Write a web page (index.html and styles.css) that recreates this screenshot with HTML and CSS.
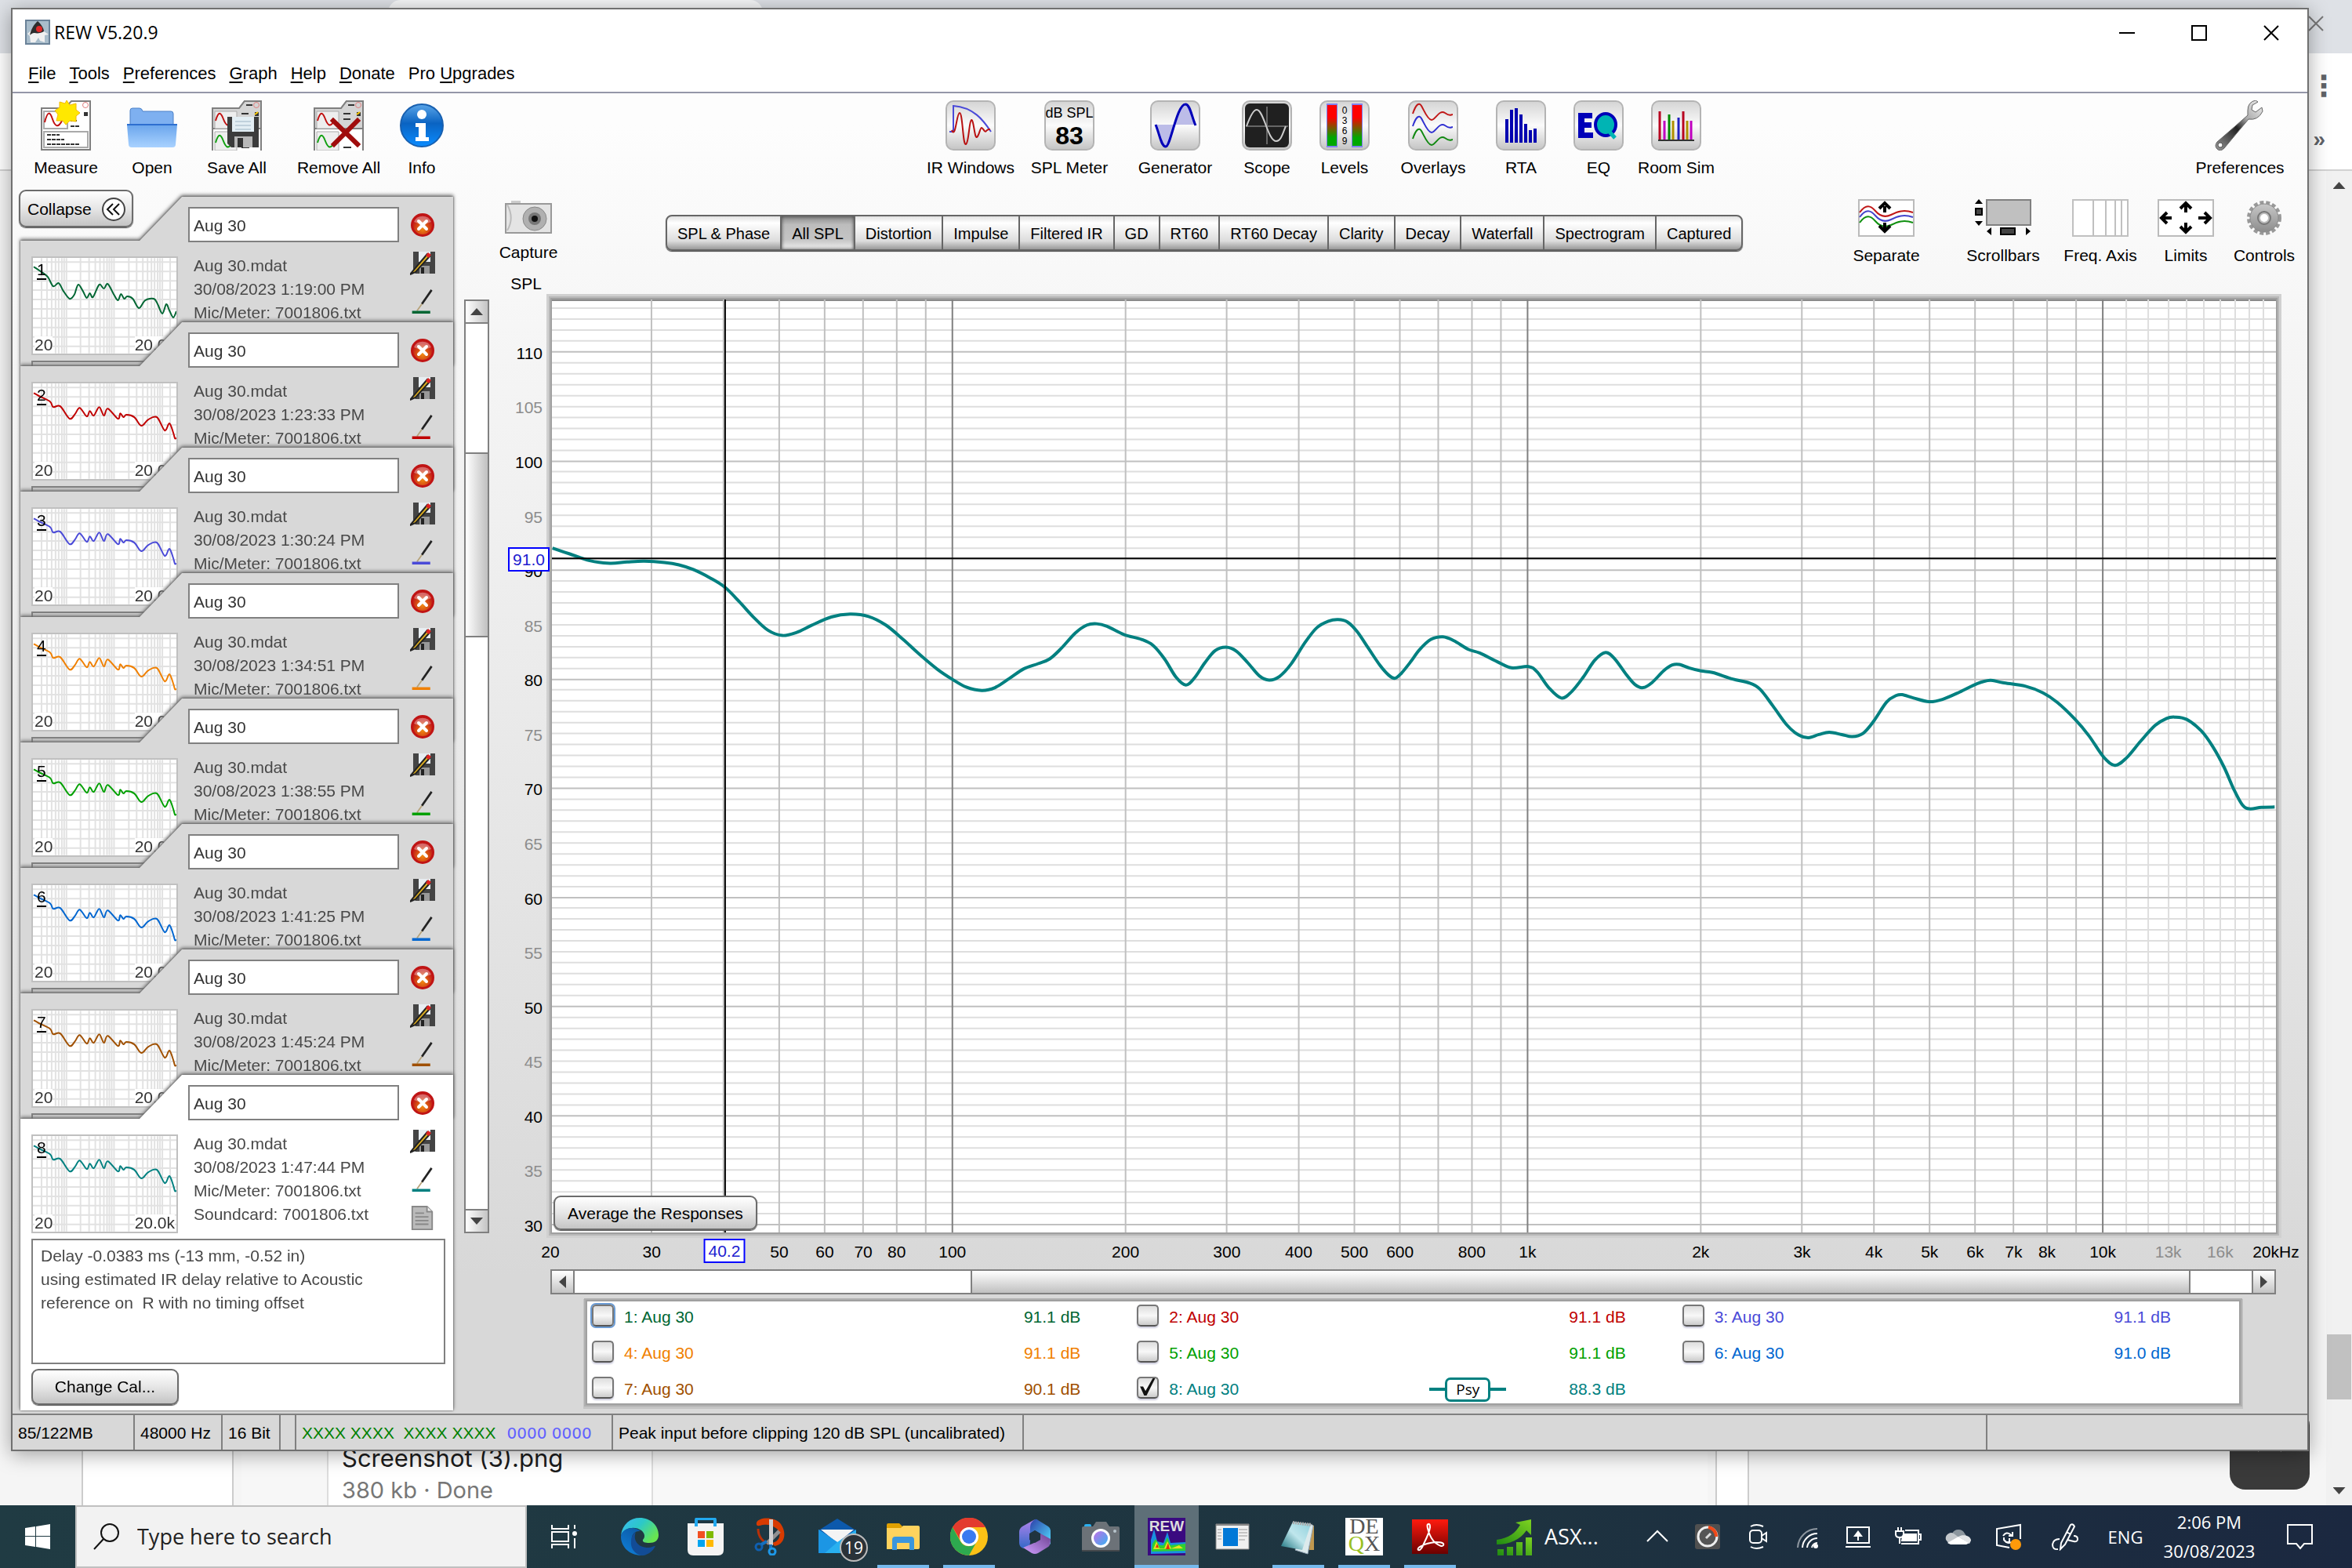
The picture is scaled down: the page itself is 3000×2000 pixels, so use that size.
FILE: index.html
```html
<!DOCTYPE html>
<html lang="en">
<head>
<meta charset="utf-8">
<title>REW V5.20.9</title>
<link rel="stylesheet" href="styles.css">
</head>
<body>
<svg class="defs" aria-hidden="true">
  <defs>
    <linearGradient id="gKey" x1="0" y1="0" x2="0" y2="1"><stop offset="0" stop-color="#d4d4d4"/><stop offset=".5" stop-color="#fbfbfb"/><stop offset="1" stop-color="#c4c4c4"/></linearGradient>
    <linearGradient id="gFolder" x1="0" y1="0" x2="0" y2="1"><stop offset="0" stop-color="#6aa5ec"/><stop offset="1" stop-color="#a9d2ff"/></linearGradient>
    <linearGradient id="gInfo" x1="0" y1="0" x2="0" y2="1"><stop offset="0" stop-color="#5aa5e8"/><stop offset=".45" stop-color="#0a63c2"/><stop offset="1" stop-color="#0a8cff"/></linearGradient>
    <linearGradient id="gLevel" x1="0" y1="0" x2="0" y2="1"><stop offset=".3" stop-color="#f00"/><stop offset=".8" stop-color="#00a800"/></linearGradient>
    <radialGradient id="gClose" cx=".5" cy=".7" r=".6"><stop offset="0" stop-color="#f08a10"/><stop offset="1" stop-color="#c01818"/></radialGradient>
    <linearGradient id="gWrench" x1="1" y1="0" x2="0" y2="1"><stop offset="0" stop-color="#f4f4f4"/><stop offset=".35" stop-color="#aaa"/><stop offset=".55" stop-color="#222"/><stop offset="1" stop-color="#999"/></linearGradient>
    <linearGradient id="gGear" x1="0" y1="0" x2="0" y2="1"><stop offset="0" stop-color="#c8c8c8"/><stop offset="1" stop-color="#8c8c8c"/></linearGradient>
    <linearGradient id="gEdge" x1="0" y1="0" x2="1" y2=".6"><stop offset="0" stop-color="#3ab8f4"/><stop offset=".5" stop-color="#2cc8c8"/><stop offset="1" stop-color="#68e650"/></linearGradient>
    <linearGradient id="gEdgeBlue" x1="0" y1="1" x2=".6" y2="0"><stop offset="0" stop-color="#0f82dc"/><stop offset="1" stop-color="#0c5aa6"/></linearGradient>
    <linearGradient id="gRed" x1="0" y1="0" x2="0" y2="1"><stop offset="0" stop-color="#ff1a0e"/><stop offset="1" stop-color="#6a0000"/></linearGradient>
    <linearGradient id="gAsx" x1="0" y1="1" x2="1" y2="0"><stop offset="0" stop-color="#1f8a12"/><stop offset="1" stop-color="#7ed321"/></linearGradient>
    <linearGradient id="gNote" x1="1" y1="0" x2="0" y2="1"><stop offset="0" stop-color="#8ed0dc"/><stop offset=".5" stop-color="#bfe6ec"/><stop offset="1" stop-color="#17707c"/></linearGradient>
    <linearGradient id="gLens" x1="0" y1="0" x2="1" y2="1"><stop offset="0" stop-color="#c070e8"/><stop offset="1" stop-color="#38b0f0"/></linearGradient>
    <linearGradient id="gM1" x1="0" y1="0" x2="0" y2="1"><stop offset="0" stop-color="#b284ec"/><stop offset="1" stop-color="#3468c8"/></linearGradient>
    <linearGradient id="gM2" x1="0" y1="0" x2="1" y2="1"><stop offset="0" stop-color="#2c3fa8"/><stop offset="1" stop-color="#52dcff"/></linearGradient>
    <linearGradient id="gM3" x1="1" y1="0" x2="0" y2="1"><stop offset="0" stop-color="#6c4090"/><stop offset="1" stop-color="#cfa0ff"/></linearGradient>
    <symbol id="key" viewBox="0 0 64 64"><rect x="1" y="1" width="62" height="62" rx="9" fill="url(#gKey)" stroke="#b4b4b4" stroke-width="2"/></symbol>
    <symbol id="sheet" viewBox="0 0 64 64">
      <path d="M1 64V10h34l7-9h21v63" fill="#fff" stroke="#7f7f7f" stroke-width="2"/>
      <path d="M1 36V10h34l7-9h21v35z" fill="#d4d4d4" stroke="#7f7f7f" stroke-width="2"/>
      <path d="M4 14h28v22H4zM4 40h28v24H4z" fill="#eee" stroke="#aaa"/>
      <path d="M5 26c4-14 7-10 10-2s6 10 10 4" fill="none" stroke="#c01010" stroke-width="2"/>
      <path d="M5 54c4-14 7-10 10-2s6 10 10 4" fill="none" stroke="#10a010" stroke-width="2"/>
      <path d="M44 6h8M38 17h9M38 24h9M38 44h9M38 60h10" stroke="#333" stroke-width="2"/>
      <circle cx="57" cy="6" r="3.5" fill="none" stroke="#e08080"/><path d="M55 15h5v5h-5z" fill="#333"/><path d="M55 18l4-3" stroke="#fc0" stroke-width="2"/>
    </symbol>
    <symbol id="close" viewBox="0 0 32 32"><circle cx="16" cy="16" r="15" fill="#c01414"/><circle cx="16" cy="16" r="12" fill="url(#gClose)"/><path d="M5 12a12 12 0 0 1 22 0q-11 5-22 0" fill="#fff" opacity=".35"/><path d="M11 11l10 10M21 11L11 21" stroke="#fff" stroke-width="4" stroke-linecap="round"/></symbol>
    <symbol id="disk" viewBox="0 0 32 30"><path d="M4 0h28v28H7l-3-3z" fill="#444"/><path d="M11 0h15v13H11z" fill="#e8eef2"/><path d="M12 18h13v10H12z" fill="#999"/><path d="M14 20h4v8h-4z" fill="#222"/><path d="M22 3L5 23l-5 6 7-3L25 6z" fill="#e0b020" stroke="#222" stroke-width="2"/><path d="M20 5l3-4 4 3-3 4z" fill="#d22"/></symbol>
    <symbol id="pen" viewBox="0 0 32 36"><path d="M29 1L15 21" stroke="#222" stroke-width="3"/><path d="M15 21l-7 10" stroke="#b5a27a" stroke-width="2"/><path d="M1 31h26v4H1z" fill="currentColor"/></symbol>
    <symbol id="doc" viewBox="0 0 32 34"><path d="M2 1h20l7 7v24H2z" fill="#bbb" stroke="#888" stroke-width="2"/><path d="M22 1v7h7" fill="#eee" stroke="#888" stroke-width="2"/><path d="M6 10h12M6 15h18M6 20h18M6 25h18" stroke="#888" stroke-width="2"/></symbol>
  </defs>
</svg>

<div class="desktop">
  <div class="browser" aria-hidden="true">
    <div class="tabstrip"><span class="browser-tab"></span><svg class="x-icon" viewBox="0 0 20 20"><path d="M1 1l18 18M19 1L1 19" stroke="#777" stroke-width="2"/></svg></div>
    <div class="browser-bar"><span class="dots">⋮</span><span class="more">»</span></div>
    <div class="browser-body">
      <div class="page">
        <div class="col-a"></div><div class="col-b"></div><div class="col-c"></div>
        <div class="file-card"><p class="file-name">Screenshot (3).png</p><p class="file-state">380 kb · Done</p></div>
        <div class="col-d"></div><div class="col-e"></div>
        <div class="col-f"><div class="to-top"><svg viewBox="0 0 30 24"><path d="M15 0L30 24 15 13 0 24z" fill="#ccc"/></svg></div></div>
      </div>
      <div class="page-scroll"><span class="tri up"></span><span class="page-thumb"></span><span class="tri down"></span></div>
    </div>
  </div>

  <main class="rew">
    <header class="titlebar">
      <svg class="app-icon" viewBox="0 0 32 32"><rect x="1" y="1" width="30" height="30" fill="#a9bdcb" stroke="#6a8298" stroke-width="2"/><path d="M16 3c5 5 6 9 8 12l6 4-5 1 0 9-6-2-2-4-4 6H7l-1-8-3-3 6-5c2-4 3-7 7-10z" fill="#f0f0f0"/><path d="M16 2c4 3 8 9 8 13-3 2-8 3-12 2-3 0-5 2-6 3 1-6 5-14 10-18z" fill="#2c2c2c"/><circle cx="18" cy="12" r="4" fill="#e02828"/></svg>
      <h1>REW V5.20.9</h1>
      <div class="win-buttons">
        <button aria-label="Minimize"><svg viewBox="0 0 20 20"><path d="M0 10h20" stroke="#000" stroke-width="2"/></svg></button>
        <button aria-label="Maximize"><svg viewBox="0 0 20 20"><path d="M1 1h18v18H1z" fill="none" stroke="#000" stroke-width="2"/></svg></button>
        <button aria-label="Close"><svg viewBox="0 0 20 20"><path d="M1 1l18 18M19 1L1 19" stroke="#000" stroke-width="2"/></svg></button>
      </div>
    </header>
    <nav class="menu">
      <a href="#"><u>F</u>ile</a><a href="#"><u>T</u>ools</a><a href="#"><u>P</u>references</a><a href="#"><u>G</u>raph</a><a href="#"><u>H</u>elp</a><a href="#"><u>D</u>onate</a><a href="#">Pro <u>U</u>pgrades</a>
    </nav>

    <div class="toolbar">
      <div class="tools-left">
        <button class="tool"><svg viewBox="0 0 64 64"><path d="M1 63V10h30l8-9h24v62z" fill="#fff" stroke="#7f7f7f" stroke-width="2"/><path d="M4 14h30v22H4zM4 40h56v20H4z" fill="#fff" stroke="#aaa" stroke-width="2"/><path d="M5 28c4-16 7-13 10-4s7 12 12 2" fill="none" stroke="#c01010" stroke-width="2"/><path d="M8 44h16M8 50h22M8 56h42M38 33h12M38 26h8" stroke="#333" stroke-width="2" stroke-dasharray="5 1"/><path d="M55 15h5v5h-5z" fill="#333"/><circle cx="57" cy="6" r="3.5" fill="none" stroke="#e08080"/><path d="M33 0l4 6 8-2 0 8 5 4-5 4 0 7-8-1-5 5-4-5-8 0 2-8-4-5 6-4 0-7 7 2z" fill="#ffe800" stroke="#f4b800"/></svg>Measure</button>
        <button class="tool"><svg viewBox="0 0 64 64"><path d="M4 32V13q0-3 3-3h9q3 0 4 4h36q3 0 3 3v15z" fill="#7eb0f0" stroke="#4a80c8" stroke-width="1"/><path d="M0 31h64l-2 25q0 4-4 4H6q-4 0-4-4z" fill="url(#gFolder)"/><path d="M0 31h64" stroke="#2d6fd0" stroke-width="2"/></svg>Open</button>
        <button class="tool"><svg viewBox="0 0 64 64"><use href="#sheet"/><path d="M20 21h40v39H25l-5-5z" fill="#3c3c3c"/><path d="M26 21h28v19H26z" fill="#e3eef4"/><path d="M30 27h20M30 32h20M30 37h20" stroke="#9db4c4"/><path d="M29 46h23v14H29z" fill="#b8b8b8"/><path d="M33 48h7v12h-7z" fill="#333"/></svg>Save All</button>
        <button class="tool"><svg viewBox="0 0 64 64"><use href="#sheet"/><path d="M25 26l31 30M56 26L26 56" stroke="#a00c0c" stroke-width="6" stroke-linecap="square"/></svg>Remove All</button>
        <button class="tool"><svg viewBox="0 0 64 64"><circle cx="32" cy="32" r="27" fill="url(#gInfo)" stroke="#1860b0" stroke-width="2"/><circle cx="32" cy="18" r="6" fill="#fff"/><path d="M24 29h13v18h4v5H24v-5h4V34h-4z" fill="#fff"/></svg>Info</button>
      </div>
      <div class="tools-mid">
        <button class="tool"><svg viewBox="0 0 64 64"><use href="#key"/><path d="M5 40h5V7c26 2 38 18 48 33" fill="none" stroke="#4a4ad8" stroke-width="2"/><path d="M8 38c5 12 6-22 10-22s4 42 8 40 4-30 7-31 4 24 7 22 4-12 6-12 4 7 6 4 3-2 5-2" fill="none" stroke="#b81010" stroke-width="2"/></svg>IR Windows</button>
        <button class="tool"><svg viewBox="0 0 64 64"><use href="#key"/><text x="32" y="22" class="key-small">dB SPL</text><text x="32" y="56" class="key-big">83</text></svg>SPL Meter</button>
        <button class="tool"><svg viewBox="0 0 64 64"><use href="#key"/><path d="M7 31h25c-5 12-6 28-12 28S12 40 7 31M32 31h26C52 20 50 5 45 5s-8 14-13 26" fill="#bcbce8"/><path d="M7 31c5 12 7 28 13 28S34 5 45 5c6 0 8 16 13 27" fill="none" stroke="#0000b8" stroke-width="3"/></svg>Generator</button>
        <button class="tool"><svg viewBox="0 0 64 64"><use href="#key"/><rect x="4" y="4" width="56" height="56" rx="6" fill="#202020"/><path d="M5 33h54M32 8v48" stroke="#666" stroke-width="2"/><path d="M6 33c5-14 9-21 13-21 9 0 14 40 25 40 6 0 8-10 12-19" fill="none" stroke="#ccc" stroke-width="2"/></svg>Scope</button>
        <button class="tool"><svg viewBox="0 0 64 64"><use href="#key"/><path d="M9 4h14v56H9zM41 4h14v56H41z" fill="#8080f0"/><path d="M10 6h12v52H10zM42 6h12v52H42z" fill="url(#gLevel)"/><text x="32" y="17" class="key-tiny">0</text><text x="32" y="30" class="key-tiny">3</text><text x="32" y="43" class="key-tiny">6</text><text x="32" y="56" class="key-tiny">9</text></svg>Levels</button>
        <button class="tool"><svg viewBox="0 0 64 64"><use href="#key"/><g fill="none" stroke-width="2"><path d="M6 17c4-12 8-15 11-10s8 18 13 18 10-14 17-9 7 2 10 2" stroke="#c01818"/><path d="M6 33c4-12 8-15 11-10s8 18 13 18 10-14 17-9 7 2 10 2" stroke="#3030d0"/><path d="M6 49c4-12 8-15 11-10s8 18 13 18 10-14 17-9 7 2 10 2" stroke="#108810"/></g></svg>Overlays</button>
        <button class="tool"><svg viewBox="0 0 64 64"><use href="#key"/><path d="M14 54V24M20 54V12M26 54V10M32 54V18M38 54V30M44 54V38M50 54V36" stroke="#0000b0" stroke-width="4"/></svg>RTA</button>
        <button class="tool"><svg viewBox="0 0 64 64"><use href="#key"/><path d="M6 16h18v7H14v5h9v7h-9v6h11v7H6z" fill="#0000b8"/><ellipse cx="41" cy="31" rx="13" ry="14" fill="#00b4b4" stroke="#0000b8" stroke-width="4"/><path d="M44 38l9 10" stroke="#00b4b4" stroke-width="5"/></svg>EQ</button>
        <button class="tool"><svg viewBox="0 0 64 64"><use href="#key"/><g stroke-width="3"><path d="M11 14v36M41 14v36" stroke="#b80020"/><path d="M17 26v24M51 26v24" stroke="#c000c0"/><path d="M23 18v32" stroke="#008800"/><path d="M28 26v24M46 26v24" stroke="#b09000"/><path d="M35 22v28" stroke="#2020c0"/></g><path d="M9 51h46" stroke="#333" stroke-width="2"/></svg>Room Sim</button>
      </div>
      <div class="tools-right">
        <button class="tool"><svg viewBox="0 0 64 64"><path d="M52 0q-10 2-10 13v6L3 53q-4 5 0 9 4 4 9-1l31-37q12 2 18-10l-1-5-8 6-5-3 1-6 7-4z" fill="url(#gWrench)" stroke="#666"/><circle cx="7" cy="57" r="3" fill="#fff" stroke="#555"/></svg>Preferences</button>
      </div>
    </div>

    <div class="workspace">
      <aside class="sidebar">
        <button class="btn collapse">Collapse <svg viewBox="0 0 30 30"><circle cx="15" cy="15" r="14" fill="#fff" stroke="#444" stroke-width="2"/><path d="M14 8l-7 7 7 7M22 8l-7 7 7 7" fill="none" stroke="#111" stroke-width="2"/></svg></button>
        <div class="cards" id="cards"></div>
      </aside>

      <div class="vscroll"><button aria-label="Scroll up"><i class="tri up"></i></button><span class="vtrack"><span class="vthumb"></span></span><button aria-label="Scroll down"><i class="tri down"></i></button></div>

      <section class="graph">
        <div class="graph-head">
          <div class="capture-col">
            <button class="tool small"><svg class="camera" viewBox="0 0 60 42"><path d="M8 0h12v5H8z" fill="#ccc"/><rect x="1" y="4" width="58" height="37" fill="#e4e4e4" stroke="#999" stroke-width="2"/><path d="M3 38c6-10 6-22 0-33" fill="none" stroke="#bbb" stroke-width="2"/><circle cx="38" cy="23" r="15" fill="#b0b0b0" stroke="#888"/><circle cx="38" cy="23" r="8" fill="#777"/><circle cx="38" cy="23" r="4" fill="#111"/></svg>Capture</button>
            <span class="axis-title">SPL</span>
          </div>
          <div class="tabs" role="tablist">
            <button role="tab">SPL &amp; Phase</button><button role="tab" class="on">All SPL</button><button role="tab">Distortion</button><button role="tab">Impulse</button><button role="tab">Filtered IR</button><button role="tab">GD</button><button role="tab">RT60</button><button role="tab">RT60 Decay</button><button role="tab">Clarity</button><button role="tab">Decay</button><button role="tab">Waterfall</button><button role="tab">Spectrogram</button><button role="tab">Captured</button>
          </div>
          <div class="graph-tools">
            <button class="tool small separate"><svg viewBox="0 0 72 48"><rect x="1" y="1" width="70" height="46" fill="#fff" stroke="#bbb" stroke-width="2"/><g fill="none" stroke-width="2"><path d="M2 17C10 6 16 8 22 15s12 9 20 5 16-7 28-3" stroke="#c01818"/><path d="M2 23c8-11 14-9 20-2s12 9 20 5 16-7 28-3" stroke="#4444cc"/><path d="M2 30c8-11 14-9 20-2s12 9 20 5 16-7 28-3" stroke="#109010"/></g><path d="M34 17V9M34 30v8M27 12l7-7 7 7M27 34l7 7 7-7" fill="none" stroke="#000" stroke-width="4"/></svg>Separate</button>
            <button class="tool small wide"><svg viewBox="0 0 72 48"><rect x="15" y="1" width="56" height="32" fill="#c0c0c0" stroke="#808080" stroke-width="2"/><path d="M1 12h8v8H1zM33 37h18v8H33z" fill="#444" stroke="#000" stroke-width="2"/><path d="M5 0l5 6H0zM5 34l5-6H0zM15 41l6-5v10zM71 41l-6-5v10z" fill="#000"/></svg>Scrollbars</button>
            <button class="tool small wide"><svg viewBox="0 0 72 48"><rect x="1" y="1" width="70" height="46" fill="#fff" stroke="#c0c0c0" stroke-width="2"/><path d="M27 1v46M43 1v46M55 1v46M63 1v46" stroke="#c0c0c0" stroke-width="2"/></svg>Freq. Axis</button>
            <button class="tool small limits"><svg viewBox="0 0 72 48"><rect x="1" y="1" width="70" height="46" fill="#fff" stroke="#bbb" stroke-width="2"/><path d="M36 17V8M36 30v9M18 24H8M52 24h12M29 12l7-7 7 7M29 35l7 7 7-7M12 17l-7 7 7 7M60 17l7 7-7 7" fill="none" stroke="#000" stroke-width="4"/></svg>Limits</button>
            <button class="tool small controls"><svg viewBox="0 0 72 48"><circle cx="36" cy="24" r="20" fill="none" stroke="#999" stroke-width="4" stroke-dasharray="5 3"/><circle cx="36" cy="24" r="18" fill="url(#gGear)" stroke="#888"/><circle cx="36" cy="24" r="8" fill="#bbb" stroke="#777" stroke-width="2"/><circle cx="36" cy="24" r="5" fill="#fff"/></svg>Controls</button>
          </div>
        </div>
        <div class="plot-row">
          <div class="y-axis" id="yAxis"><span class="cursor-y">91.0</span></div>
          <div class="plot">
            <svg id="plot" viewBox="0 0 2200 1193" preserveAspectRatio="none" role="img" aria-label="SPL against frequency"></svg>
            <button class="btn average">Average the Responses</button>
          </div>
        </div>
        <div class="x-axis" id="xAxis"><span class="cursor-x">40.2</span></div>
        <div class="hscroll"><button aria-label="Scroll left"><i class="tri left"></i></button><span class="htrack"><span class="hthumb"></span></span><button aria-label="Scroll right"><i class="tri right"></i></button></div>
        <div class="legend" id="legend"></div>
      </section>
    </div>

    <footer class="status">
      <span>85/122MB</span><span>48000 Hz</span><span>16 Bit</span><span></span>
      <span class="bits"><b class="green">XXXX XXXX&nbsp; XXXX XXXX</b><b class="blue">0000 0000</b></span>
      <span>Peak input before clipping 120 dB SPL (uncalibrated)</span><span></span><span></span>
    </footer>
  </main>
</div>

<footer class="taskbar">
  <button class="start" aria-label="Start"><svg viewBox="0 0 32 32"><path d="M0 5l13-2v12H0zM14 3l18-3v15H14zM0 16h13v13L0 27zM14 16h18v16l-18-3z" fill="#fff"/></svg></button>
  <label class="search"><svg viewBox="0 0 34 34"><circle cx="21" cy="12" r="11" fill="none" stroke="#111" stroke-width="2"/><path d="M13 20L1 33" stroke="#111" stroke-width="2"/></svg><input type="text" aria-label="Search" placeholder="Type here to search"></label>
  <div class="apps">
    <button class="app" aria-label="Task View"><svg viewBox="0 0 48 48"><path d="M8 9v5h21V9M8 39v-5h21v5M8 18h21v12H8zM37 9v5M37 26v13" fill="none" stroke="#fff" stroke-width="2"/><circle cx="37" cy="20" r="3" fill="#fff"/></svg></button>
    <button class="app" aria-label="Edge"><svg viewBox="0 0 48 48"><path d="M0 22C2 8 12 0 24 0c14 0 24 10 24 22 0 7-5 10-12 10-5 0-9-1-8-4 3-3 3-8-2-12C18 10 5 12 0 22z" fill="url(#gEdge)"/><path d="M0 24C0 14 16 9 25 17c-8-1-12 5-11 12 1 10 9 18 18 18C16 51 0 40 0 24z" fill="url(#gEdgeBlue)"/><path d="M19 18c-4 10 2 20 16 20 4 0 6-2 9-2-4 8-11 12-18 12-9-2-14-10-13-18 0-6 3-10 6-12z" fill="#124c96"/></svg></button>
    <button class="app" aria-label="Microsoft Store"><svg viewBox="0 0 48 48"><path d="M1 7h46v34q0 7-7 7H8q-7 0-7-7z" fill="#f4f4f4"/><path d="M12 11V3q0-2 2-2h20q2 0 2 2v8" fill="none" stroke="#22a9f0" stroke-width="4"/><path d="M14 17h9v9h-9z" fill="#f25022"/><path d="M25 17h9v9h-9z" fill="#7fba00"/><path d="M14 28h9v9h-9z" fill="#00a4ef"/><path d="M25 28h9v9h-9z" fill="#ffb900"/></svg></button>
    <button class="app" aria-label="Snip"><svg viewBox="0 0 48 48"><path d="M7 14c0 10 6 18 15 19" fill="none" stroke="#b83008" stroke-width="3"/><path d="M5 6C8-1 28-2 36 8c8 11 5 26-8 28l-3-4c10-2 12-12 6-18-6-5-12-6-18-5-4 1-9 3-8-3z" fill="#d83b01"/><path d="M34 17L18 33" stroke="#909090" stroke-width="5"/><path d="M21 2h5v33h-5z" fill="#d0d0d0"/><circle cx="8" cy="37" r="4" fill="none" stroke="#0f5fb0" stroke-width="3"/><path d="M11 34l7-4M23 34v5" stroke="#1570c0" stroke-width="4"/><circle cx="25" cy="43" r="4" fill="none" stroke="#1d98e8" stroke-width="3"/></svg></button>
    <button class="app" aria-label="Mail, 19 unread"><svg viewBox="0 0 48 48"><path d="M0 16L24 1l24 15v29H0z" fill="#0c59ac"/><path d="M3 15h42L24 32z" fill="#f4f4f4"/><path d="M0 15l24 16 24-16v30H0z" fill="#28b0f0"/><path d="M0 45V15l24 16L8 45z" fill="#1c96e4"/></svg><span class="badge">19</span></button>
    <button class="app open" aria-label="File Explorer"><svg viewBox="0 0 48 48"><path d="M3 9q0-2 2-2h14l4 4v6H3z" fill="#e0a000"/><path d="M3 13h18l3-3h19q2 0 2 2v26q0 2-2 2H3z" fill="#ffd35e"/><path d="M10 41V28q0-4 4-4h20q4 0 4 4v13h-6v-9H16v9z" fill="#3a96dd"/></svg></button>
    <button class="app open" aria-label="Chrome"><svg viewBox="0 0 48 48"><circle cx="24" cy="24" r="24" fill="#fbc116"/><path d="M3 12a24 24 0 0 1 42 0H24a12 12 0 0 0-10 18z" fill="#e33b2e"/><path d="M3 12a24 24 0 0 0 21 36l10-18a12 12 0 0 1-21 0z" fill="#2da94f"/><circle cx="24" cy="24" r="12" fill="#fff"/><circle cx="24" cy="24" r="9" fill="#3a7af0"/></svg></button>
    <button class="app" aria-label="Microsoft 365"><svg viewBox="0 0 48 48"><path d="M24 2L8 11q-4 3-4 7v14q0 5 5 7l7-2q2-2 2-7V16z" fill="url(#gM1)"/><path d="M24 2q-6 4-6 10v8l6-4 8 5 12 13V16q0-3-3-5L28 3q-2-2-4-1z" fill="url(#gM2)"/><path d="M44 27q0 8-3 10L28 45q-4 2-8 0L9 38l14-6q6-3 8-12z" fill="url(#gM3)"/><path d="M24 16l7 4v8l-7 4-7-4v-8z" fill="#20343f"/></svg></button>
    <button class="app" aria-label="Camera"><svg viewBox="0 0 48 48"><path d="M3 10q0-2 2-2h5q2 0 2 2v4H3z" fill="#2ab0f0"/><path d="M2 11h12l4-6h13l4 6h11q2 0 2 2v28q0 2-2 2H2q-2 0-2-2V13q0-2 2-2z" fill="#6c7278"/><path d="M0 41h48v2H0z" fill="#44484c"/><circle cx="24" cy="26" r="12" fill="#fff"/><circle cx="24" cy="26" r="9" fill="url(#gLens)"/><circle cx="42" cy="17" r="2" fill="#b8c4cc"/></svg></button>
    <button class="app open current" aria-label="REW"><svg viewBox="0 0 48 48"><path d="M0 0h48v48H0z" fill="#3a0a80"/><path d="M4 46V28l4-14 4 16 8 2 5-14 4 14 19-1v14z" fill="#1a90e0"/><path d="M5 43l1-10 4-6 5 8 5 0 5-10 4 10 19-2v9z" fill="#30d030"/><path d="M7 40l4-10 4 9 6 0 4-9 5 9 10-4 5 4z" fill="#e8e020"/><path d="M10 38l2-5 2 5zM23 40l3-8 2 8z" fill="#e03010"/><text x="24" y="17" class="rew-label">REW</text></svg></button>
    <button class="app" aria-label="Window"><svg viewBox="0 0 48 48"><path d="M3 8h42v32H3z" fill="#f0f0f0" stroke="#888"/><path d="M3 8h42v2H3z" fill="#888"/><path d="M12 13h19v23H12z" fill="#0078d7"/><path d="M32 15h11M32 19h11M32 23h11M32 28h8M5 15h5M5 19h5M5 23h5M5 27h5" stroke="#999"/></svg></button>
    <button class="app open" aria-label="Notepad"><svg viewBox="0 0 48 48"><path d="M40 8l4 2v31h-6z" fill="#c09850"/><path d="M38 7l5 3-7 36-16-5z" fill="#dceaec" stroke="#9ab" stroke-width="1"/><path d="M17 5l23 3-11 33-27-5z" fill="url(#gNote)"/><path d="M17 6l24 3" stroke="#aaa" stroke-width="4" stroke-dasharray="2 1"/></svg></button>
    <button class="app open" aria-label="DEQX"><svg viewBox="0 0 48 48"><path d="M0 0h48v48H0z" fill="#fff"/><text x="24" y="20" class="deqx">DE</text><text x="24" y="42" class="deqx"><tspan fill="#9ac020">Q</tspan>X</text></svg></button>
    <button class="app open" aria-label="Acrobat"><svg viewBox="0 0 48 48"><path d="M1 2h46v44H1z" fill="url(#gRed)"/><path d="M22 8q-3 0 0 9 3 10 9 15 8 6 10 3 2-4-10-4-11 1-18 5-6 3-4 5 3 2 8-10 6-12 7-19 0-5-2-4z" fill="none" stroke="#fff" stroke-width="2"/></svg></button>
  </div>
  <a class="news" href="#"><svg viewBox="0 0 48 48"><path d="M2 28c16-2 24-9 30-19l-6-3L46 2v20l-6-6C32 28 18 34 2 34z" fill="url(#gAsx)"/><path d="M3 40h8v8H3zM15 37h8v11h-8zM27 31h8v17h-8zM39 25h8v23h-8z" fill="url(#gAsx)"/></svg>ASX...</a>
  <div class="tray">
    <svg viewBox="0 0 36 36"><path d="M5 24l13-13 13 13" fill="none" stroke="#fff" stroke-width="2"/></svg>
    <svg viewBox="0 0 36 36"><rect x="2" y="2" width="32" height="32" rx="3" fill="#505050" stroke="none"/><circle cx="18" cy="18" r="12" fill="#555" stroke="#eee" stroke-width="3"/><path d="M16 20l6-6" stroke="#ddd" stroke-width="3"/><path d="M19 6a12 12 0 0 1 10 12" fill="none" stroke="#f04818" stroke-width="4"/></svg>
    <svg viewBox="0 0 36 36"><rect x="8" y="10" width="15" height="16" rx="4"/><path d="M23 17l6-4v11l-6-4M9 5q7-4 16 0M9 31q7 4 16 0"/></svg>
    <svg viewBox="0 0 36 36"><path d="M5 32A25 25 0 0 1 30 8" opacity=".5"/><path d="M11 32a19 19 0 0 1 19-18M17 32a13 13 0 0 1 13-12M23 32a7 7 0 0 1 7-6"/><circle cx="28" cy="30" r="2" fill="#fff"/></svg>
    <svg viewBox="0 0 36 36"><path d="M4 6h28v20H4zM2 31h32M18 23v-9"/><path d="M18 10l6 8H12z" fill="#fff" stroke="none"/></svg>
    <svg viewBox="0 0 36 36"><path d="M14 10h17v17H9M31 15h3v7h-3M5 6v5M9 6v5M2 11h10v4q0 4-5 4t-5-4zM7 19v8"/><path d="M12 15h16v8H10z" fill="#fff"/></svg>
    <svg viewBox="0 0 36 36"><path d="M10 14a9 9 0 0 1 16 0l4 6H8z" fill="#8c969e" stroke="none"/><path d="M2 22a7 7 0 0 1 10-8l8 6-14 7z" fill="#c4c8cc" stroke="none"/><path d="M4 26l14-8 14 8-4 2H8z" fill="#fff" stroke="none"/><path d="M18 18c6-4 16-1 16 5l-2 4z" fill="#e4e6e8" stroke="none"/></svg>
    <svg viewBox="0 0 36 36"><path d="M19 32L3 29V8l30-5v18M11 17q4-6 9-2l3 2M23 12v5h-5M19 20v5h-5M21 25q-4 3-9-3v-3"/><circle cx="27" cy="28" r="7" fill="#ff9a0a" stroke="none"/></svg>
    <svg class="pen-tray" viewBox="0 0 36 36"><path d="M12 34l1-8L25 3q3-2 5 2L18 28zM20 12l5 3M9 34q-7 1-7-6 1-7 9-7M29 17q5 0 5 4t-5 3-8-2"/></svg>
  </div>
  <span class="lang">ENG</span>
  <div class="clock"><span>2:06 PM</span><span>30/08/2023</span></div>
  <button class="notify" aria-label="Notifications"><svg viewBox="0 0 36 36"><path d="M2 3h31v24H23l-5 6-5-6H2z" fill="none" stroke="#fff" stroke-width="2"/></svg></button>
</footer>
<script src="app.js"></script>
</body>
</html>
```
FILE: styles.css
```css
* { box-sizing: border-box; }
body { margin: 0; height: 100vh; display: flex; flex-direction: column; overflow: hidden; font: 21px/26px "Liberation Sans", Arial, sans-serif; color: #000; }
button { font: inherit; color: inherit; border: 0; padding: 0; background: none; }
a { color: inherit; text-decoration: none; }
p, h1 { margin: 0; font-weight: 400; }
.defs { position: absolute; width: 0; height: 0; }
.desktop { position: relative; flex: 1; min-height: 0; }

/* browser behind the window */
.browser { height: 100%; display: flex; flex-direction: column; background: #f5f5f5; isolation: isolate; }
.tabstrip { height: 68px; background: #dee1e6; display: flex; justify-content: space-between; }
.browser-tab { margin-left: 495px; width: 478px; height: 40px; background: #f6f7f8; border-radius: 16px 16px 0 0; }
.x-icon { width: 20px; height: 20px; margin: 20px 36px 0 0; }
.browser-bar { height: 150px; background: #fff; border-bottom: 2px solid #d2d2d2; display: flex; flex-direction: column; align-items: flex-end; padding: 24px 34px 0 0; color: #5f6368; }
.dots { font: 700 36px/36px "DejaVu Sans", sans-serif; width: 20px; text-align: center; }
.more { font: 700 28px/36px "Liberation Sans", sans-serif; margin-top: 32px; }
.browser-body { flex: 1; min-height: 0; display: flex; }
.page { flex: 1; display: flex; }
.col-a { width: 106px; border-right: 2px solid #ccc; }
.col-b { width: 192px; background: #fff; border-right: 2px solid #ccc; }
.col-c { width: 119px; margin-left: 10px; margin-right: -10px; background: #f7f7f7; }
.file-card { width: 416px; background: #fff; border: 2px solid #ddd; border-width: 0 2px; padding-left: 17px; display: flex; flex-direction: column; justify-content: flex-end; position: relative; z-index: 1; font-family: Inter, "Open Sans", sans-serif; }
.file-name { font-size: 31px; line-height: 44px; color: #1c1c1c; }
.file-state { font-size: 29px; line-height: 38px; color: #777; }
.col-d { flex: 1; background: #f8f8f8; }
.col-e { width: 43px; background: #fff; border: 2px solid #ccc; border-width: 0 2px; margin-left: 10px; }
.col-f { width: 736px; display: flex; justify-content: flex-end; align-items: flex-end; padding: 0 21px 20px 0; }
.to-top { width: 102px; height: 102px; border-radius: 20px; background: #3a3a3a; text-align: center; padding-top: 30px; }
.to-top svg { width: 30px; height: 24px; }
.page-scroll { width: 33px; background: #f1f1f1; display: flex; flex-direction: column; align-items: center; padding: 14px 0 14px; }
.page-thumb { width: 31px; height: 83px; background: #c1c1c1; margin: auto 0 112px; }
.tri { display: block; width: 16px; height: 9px; background: #444; }
.up { clip-path: polygon(50% 0, 100% 100%, 0 100%); }
.down { clip-path: polygon(0 0, 100% 0, 50% 100%); }
.left, .right { width: 9px; height: 16px; }
.left { clip-path: polygon(100% 0, 100% 100%, 0 50%); }
.right { clip-path: polygon(0 0, 100% 50%, 0 100%); }

/* main window */
.rew { position: absolute; inset: 10px 55px 69px 14px; display: flex; flex-direction: column; border: 2px solid #707070; background: linear-gradient(#fdfdfd 8%, #f6f6f6 22%, #d8d8d8 88%); box-shadow: 0 4px 24px rgba(0,0,0,.35); }
.titlebar { height: 56px; background: #fff; display: flex; align-items: flex-start; padding: 13px 0 0 16px; font-family: "Open Sans", "Noto Sans", sans-serif; }
.app-icon { width: 32px; height: 32px; }
.titlebar h1 { font-size: 23px; line-height: 32px; margin-left: 5px; }
.win-buttons { margin: -5px 0 0 auto; display: flex; }
.win-buttons button { width: 92px; height: 40px; }
.win-buttons svg { width: 20px; height: 20px; vertical-align: middle; }
.menu { height: 51px; background: #fff; border-bottom: 2px solid #9497a8; display: flex; gap: 17px; padding: 13px 0 0 20px; font-size: 22px; }
.menu u { text-underline-offset: 3px; }
.toolbar { height: 117px; display: flex; justify-content: space-between; padding: 9px 0 0 13px; }
.tools-left, .tools-mid { display: grid; }
.tools-left { grid-template-columns: 110px 110px 106px 154px 58px; padding-right: 28px; }
.tools-mid { grid-template-columns: 126px 126px 144px 90px 108px 118px 106px 92px 106px; }
.tools-right { width: 172px; display: grid; }
.tool { display: flex; flex-direction: column; align-items: center; gap: 9px; white-space: nowrap; }
.tool > svg { width: 64px; height: 64px; flex: none; }
.key-small { font-size: 18px; text-anchor: middle; }
.key-big { font-size: 32px; font-weight: 700; text-anchor: middle; }
.key-tiny { font-size: 12px; text-anchor: middle; }
.workspace { flex: 1; min-height: 0; display: flex; }

.btn { border: 2px solid #6c6c6c; border-radius: 9px; background: linear-gradient(#fff, #e6e6e6 50%, #c4c4c4); box-shadow: 0 1px 1px #555; }

/* measurement list */
.sidebar { width: 564px; padding: 6px 2px 4px 8px; display: flex; flex-direction: column; }
.collapse { width: 146px; height: 48px; display: flex; align-items: center; justify-content: space-between; padding: 2px 8px 0 9px; flex: none; position: relative; z-index: 1; }
.collapse svg { width: 30px; height: 30px; }
.cards { flex: 1; min-height: 0; margin: -39px 0 0 2px; display: flex; flex-direction: column; }
.card-wrap { height: 216px; margin-bottom: -56px; flex: none; filter: drop-shadow(0 0 1px #555) drop-shadow(0 -2px 2px #777); }
.card-wrap:last-child { flex: 1; margin-bottom: 0; }
.card { height: 100%; overflow: hidden; background: #d8d8d8; clip-path: polygon(206px 0, 553px 0, 553px 100%, 0 100%, 0 56px, 152px 56px); color: #484848; }
.card-wrap:last-child .card { background: #fff; }
.card-grid { display: grid; grid-template-columns: 187px 269px 34px; column-gap: 13px; padding-left: 14px; height: 202px; }
.thumb { margin-top: 76px; height: 126px; border: 2px solid #c0c0c0; background: #fff; position: relative; color: #333; }
.thumb svg { width: 100%; height: 100%; display: block; }
.thumb b, .thumb i { position: absolute; font-weight: 400; font-style: normal; line-height: 22px; background: #fff; }
.thumb b { left: 5px; top: 4px; color: #000; border-bottom: 2px solid #000; background: none; }
.thumb i { bottom: 0; left: 2px; }
.thumb i + i { left: auto; right: 2px; }
.card input { width: 100%; height: 45px; margin-top: 13px; border: 2px solid #808080; background: #fff; font: inherit; color: #333; padding: 2px 5px 0; display: block; }
.info { margin: 15px 0 0 7px; line-height: 30px; white-space: nowrap; }
.card-icons { display: flex; flex-direction: column; align-items: center; padding-top: 20px; }
.card-icons svg { width: 32px; height: 32px; flex: none; }
.card-icons svg + svg { margin-top: 17px; }
.card textarea { display: block; width: 528px; height: 160px; margin: 7px 0 6px 14px; border: 2px solid #808080; background: none; resize: none; font: inherit; line-height: 30px; color: #484848; padding: 5px 10px; overflow: hidden; }
.card .btn { width: 188px; height: 46px; margin-left: 14px; color: #000; }

/* scrollbars */
.vscroll { width: 32px; margin: 146px 0 230px 12px; border: 2px solid #808080; background: #fff; display: flex; flex-direction: column; }
.vscroll button { height: 29px; background: linear-gradient(90deg, #fff, #c4c4c4); display: grid; place-items: center; border-bottom: 2px solid #808080; }
.vscroll button:last-child { border-top: 2px solid #808080; border-bottom: 0; }
.vtrack { flex: 1; display: flex; flex-direction: column; }
.vthumb { margin-top: 164px; height: 236px; border: 2px solid #808080; border-width: 2px 0; background: linear-gradient(90deg, #fff, #c0c0c0); }
.hscroll { height: 32px; flex: none; margin: 0 40px 0 78px; border: 2px solid #808080; background: #fff; display: flex; }
.hscroll button { width: 29px; background: linear-gradient(#fff, #c4c4c4); display: grid; place-items: center; border-right: 2px solid #808080; }
.hscroll button:last-child { border-right: 0; border-left: 2px solid #808080; }
.htrack { flex: 1; padding: 0 78px 0 505px; display: flex; }
.hthumb { flex: 1; border: 2px solid #808080; border-width: 0 2px; background: linear-gradient(#fff, #c0c0c0); }

/* graph */
.graph { flex: 1; min-width: 0; display: flex; flex-direction: column; }
.graph-head { height: 146px; flex: none; display: flex; align-items: flex-start; padding-right: 9px; }
.capture-col { width: 100px; display: flex; flex-direction: column; align-items: center; padding-top: 20px; }
.tool.small { gap: 11px; }
.tool.small > svg { width: 72px; height: 48px; }
.capture-col .tool.small > svg.camera { width: 60px; height: 42px; }
.axis-title { margin: 14px 6px 0 0; }
.tabs { margin: 38px 0 0 125px; height: 46px; display: flex; border: 2px solid #666; border-radius: 8px; overflow: hidden; background: linear-gradient(#e2e2e2, #fff 20%, #dcdcdc 75%, #999); box-shadow: 0 1px 1px #444; flex: none; font-size: 20px; }
.tabs button { padding: 2px 13px 0; border-right: 2px solid #666; }
.tabs button:last-child { border-right: 0; }
.tabs .on { background: linear-gradient(#8a8a8a, #bdbdbd 25%, #c4c4c4 70%, #f0f0f0); box-shadow: inset 0 0 4px #444; }
.graph-tools { margin-left: auto; display: flex; gap: 14px; padding-top: 18px; }
.separate { width: 100px; margin-right: 30px; }
.wide { width: 110px; }
.limits { width: 80px; }
.controls { width: 92px; }
.plot-row { flex: 1; min-height: 0; display: flex; padding-right: 40px; }
.y-axis { width: 80px; position: relative; }
.y-axis span, .x-axis span { position: absolute; line-height: 26px; }
.y-axis span { right: 12px; margin-top: -11px; }
.minor { color: #8c8c8c; }
.y-axis .cursor-y, .x-axis .cursor-x { border: 2px solid #00f; background: #fff; color: #2020d0; z-index: 2; text-align: center; width: 53px; height: 31px; line-height: 28px; }
.y-axis .cursor-y { top: 28%; right: 3px; margin-top: -17px; }
.x-axis .cursor-x { left: 10%; top: 8px; }
.plot { flex: 1; position: relative; background: #fff; border-top: 2px solid #8a8a8a; box-shadow: 0 0 0 2px #a0a0a0, 0 0 0 4px #b8b8b8, 0 0 0 7px #d0d0d0; }
.plot svg { position: absolute; inset: -2px 0 0; width: 100%; height: calc(100% + 2px); overflow: hidden; }
.plot path { fill: none; vector-effect: non-scaling-stroke; }
.average { position: absolute; left: 2px; bottom: 3px; width: 260px; height: 44px; padding-top: 2px; }
.x-axis { height: 47px; flex: none; position: relative; margin: 0 40px 0 80px; }
.x-axis span { top: 12px; transform: translateX(-50%); }
.legend { height: 130px; flex: none; margin: 9px 87px 13px 125px; background: #fff; box-shadow: 0 0 0 2px #a0a0a0, 0 0 0 4px #b0b0b0, 0 2px 0 5px #c4c4c4; display: grid; grid-template-columns: repeat(3, 1fr); grid-auto-rows: 46px; align-content: start; padding: 0 15px 0 6px; }
.trace { display: flex; align-items: center; padding: 0 72px 6px 0; }
.trace input { appearance: none; width: 28px; height: 28px; margin: 0 13px 4px 0; border: 2px solid #777; border-bottom-color: #555; border-radius: 5px; background: linear-gradient(#ddd, #f8f8f8 50%, #ccc); box-shadow: 0 2px 2px #ccd; }
.trace input.focus { box-shadow: 0 0 0 2px #6a9bd4; }
.trace input:checked::before { content: ""; display: block; width: 22px; height: 22px; background: #111; clip-path: polygon(8% 48%, 26% 48%, 40% 74%, 82% 0, 96% 0, 46% 100%, 32% 100%); }
.trace output { margin-left: auto; }
.psy { margin-left: auto; display: flex; align-items: center; width: 98px; color: #000; font: 19px/25px "Open Sans", sans-serif; }
.psy::before, .psy::after { content: ""; flex: 1; height: 4px; background: #008080; }
.psy b { font-weight: 400; border: 3px solid #008080; border-radius: 7px; width: 58px; text-align: center; }
.trace .psy + output { margin-left: 80px; }

.status { height: 46px; flex: none; border-top: 2px solid #808080; background: #d8d8d8; display: grid; grid-template-columns: 156px 112px 74px 20px 404px 524px 1fr 408px; line-height: 46px; white-space: nowrap; }
.status > span { border-right: 2px solid #808080; padding-left: 7px; overflow: hidden; }
.status > span:last-child { border: 0; }
.status b { font-weight: 400; }
.green { color: #008000; }
.blue { color: #6060ff; margin-left: 14px; font-family: "DejaVu Sans", sans-serif; font-size: 20px; }

/* taskbar */
.taskbar { height: 80px; flex: none; display: flex; align-items: stretch; background: linear-gradient(90deg, #203b43, #1e3440 60%, #1b2840); color: #fff; font-family: "Open Sans", "Noto Sans", sans-serif; }
.start { width: 96px; }
.start svg { width: 32px; height: 32px; vertical-align: middle; }
.search { width: 576px; background: #f2f2f2; border: 2px solid #c0c0c0; display: flex; align-items: center; padding-left: 21px; }
.search svg { width: 34px; height: 34px; }
.search input { border: 0; background: none; font: 27px/36px "Open Sans", "Noto Sans", sans-serif; margin-left: 22px; padding: 0; width: 440px; }
.search input::placeholder { color: #222; opacity: 1; }
.apps { display: flex; flex: none; gap: 2px; margin-left: 7px; }
.app { width: 82px; flex: none; position: relative; display: grid; place-items: center; }
.app svg { width: 48px; height: 48px; }
.app:first-child { margin-right: 12px; }
.open::after { content: ""; position: absolute; left: 8px; right: 8px; bottom: 0; height: 4px; background: #76b9ed; }
.current { background: #5e6f78; }
.current::after { left: 0; right: 0; }
.badge { position: absolute; right: 2px; bottom: 8px; width: 36px; height: 36px; border: 2px solid #bbb; border-radius: 18px; background: #2a3238; font-size: 21px; line-height: 32px; text-align: center; }
.rew-label { font: 700 19px "Liberation Sans", sans-serif; fill: #ddd; text-anchor: middle; }
.deqx { font: 28px "Liberation Serif", serif; fill: #555; text-anchor: middle; }
.news { display: flex; align-items: center; margin-left: 42px; font-size: 27px; gap: 15px; }
.news svg { width: 48px; height: 48px; }
.tray { margin-left: auto; display: flex; align-items: center; gap: 28px; }
.tray svg { width: 36px; height: 36px; fill: none; stroke: #fff; stroke-width: 2; }
.pen-tray { margin-left: 8px; }
.lang { width: 58px; margin-left: 30px; font-size: 22px; line-height: 80px; text-align: center; }
.clock { width: 140px; margin-left: 8px; display: flex; flex-direction: column; justify-content: center; font-size: 22px; line-height: 37px; text-align: center; }
.notify { width: 92px; margin-right: 20px; }
.notify svg { width: 36px; height: 36px; vertical-align: middle; }
```
FILE: app.js
```js
const NS = 'http://www.w3.org/2000/svg';
const W = 2200, H = 1193;
const xOf = f => 511 + 734 * Math.log10(f / 100);
const yOf = db => 67 + (110 - db) * 13.95;

function addPath(svg, d, stroke, width) {
  const p = document.createElementNS(NS, 'path');
  p.setAttribute('d', d);
  p.setAttribute('stroke', stroke);
  p.setAttribute('stroke-width', width);
  svg.appendChild(p);
}

// Catmull-Rom spline through the points
function smooth(pts) {
  let d = `M${pts[0]}`;
  for (let i = 0; i < pts.length - 1; i++) {
    const a = pts[i - 1] || pts[i], b = pts[i], c = pts[i + 1], e = pts[i + 2] || c;
    d += `C${b[0] + (c[0] - a[0]) / 6},${b[1] + (c[1] - a[1]) / 6} ${c[0] - (e[0] - b[0]) / 6},${c[1] - (e[1] - b[1]) / 6} ${c}`;
  }
  return d;
}

// Trace samples: below and above roughly 600 Hz
const low = [[20,120],[50,142],[85,168],[120,178],[150,173],[180,170],[215,175],[240,184],[265,202],[295,235],[320,270],[345,325],[370,385],[395,435],[420,455],[445,443],[470,417],[505,384],[538,373],[570,382],[600,415],[630,470],[660,530],[690,585],[715,622],[740,653],[767,666],[790,655],[815,620],[840,583],[865,563],[885,545],[905,505],[930,445],[950,415],[967,410],[985,420],[1015,452],[1045,470],[1065,493],[1085,545],[1105,615],[1122,645],[1137,618],[1155,560],[1173,513],[1192,500],[1210,515],[1230,560],[1250,610],[1267,626],[1285,612],[1305,565],[1330,480],[1350,425],[1370,400],[1387,394],[1403,403],[1420,440],[1440,505],[1460,570],[1475,607],[1486,619],[1497,600]];
const high = [[0,255],[15,210],[35,170],[56,160],[75,175],[100,208],[120,222],[150,255],[175,279],[205,274],[220,295],[240,355],[262,395],[280,370],[300,315],[320,250],[339,220],[355,245],[375,305],[390,343],[404,355],[420,335],[440,290],[455,268],[467,266],[485,280],[505,291],[525,297],[560,322],[590,338],[608,362],[630,425],[655,500],[675,537],[692,547],[710,535],[728,526],[750,535],[768,543],[787,530],[805,485],[828,410],[845,385],[855,382],[875,395],[902,409],[925,400],[955,372],[985,340],[1008,327],[1030,336],[1070,350],[1100,375],[1125,412],[1155,475],[1180,540],[1205,620],[1225,653],[1245,625],[1270,560],[1295,500],[1315,473],[1329,468],[1350,477],[1375,520],[1395,580],[1415,660],[1432,745],[1447,805],[1460,820],[1480,814],[1503,813]];
const trace = low.map(([x, y]) => [x / 1.3635 - 14, y / 3 + 278])
  .concat(high.map(([x, y]) => [x / 1.3635 + 1096, y / 3 + 378]));

const plot = document.getElementById('plot');
const hLine = y => `M0 ${Math.round(y)}H${W}`;
const vLine = x => `M${Math.round(x)} 0V${H}`;
let fine = '', major = '', freq = '', decade = '';
for (let db = 30; db < 115; db++) {
  if (db % 10) fine += hLine(yOf(db)); else major += hLine(yOf(db));
}
for (let k = 11; k < 20; k++) fine += vLine(xOf(k * 1000));
[10, 100, 1000].forEach(m => {
  for (let k = 2; k < 10; k++) if (k * m > 20) freq += vLine(xOf(k * m));
  decade += vLine(xOf(m * 10));
});
addPath(plot, fine, '#dedede', 2);
addPath(plot, major + freq, '#c0c0c0', 2);
addPath(plot, decade, '#808080', 2);
addPath(plot, smooth(trace), '#008080', 4);
addPath(plot, `M0 331H${W}${vLine(xOf(40.2))}`, '#000', 2);

const yAxis = document.getElementById('yAxis');
for (let db = 110; db >= 30; db -= 5) {
  yAxis.insertAdjacentHTML('beforeend', `<span class="${db % 10 ? 'minor' : ''}" style="top:${yOf(db) / H * 100}%">${db}</span>`);
}
const xAxis = document.getElementById('xAxis');
[20, 30, 50, 60, 70, 80, 100, 200, 300, 400, 500, 600, 800, 1000, 2000, 3000, 4000, 5000, 6000, 7000, 8000, 10000, 13000, 16000, 20000].forEach(f => {
  const text = f === 20000 ? '20kHz' : f >= 1000 ? f / 1000 + 'k' : f;
  xAxis.insertAdjacentHTML('beforeend', `<span class="${f === 13000 || f === 16000 ? 'minor' : ''}" style="left:${xOf(f) / W * 100}%">${text}</span>`);
});

const measurements = [
  ['1:19:00', '#006633', '91.1'], ['1:23:33', '#c00000', '91.1'], ['1:30:24', '#4a4ad8', '91.1'],
  ['1:34:51', '#f08000', '91.1'], ['1:38:55', '#00a000', '91.1'], ['1:41:25', '#0066d0', '91.0'],
  ['1:45:24', '#a05000', '90.1'], ['1:47:44', '#008080', '88.3']
];
const thumbA = [[1,11],[10,17],[19,24],[26,36],[33,32],[39,42],[47,52],[53,47],[58,34],[64,42],[69,51],[73,45],[77,50],[85,34],[91,39],[96,33],[104,47],[109,54],[113,46],[117,52],[121,49],[128,52],[136,64],[144,54],[155,52],[160,59],[166,71],[171,59],[175,67],[180,76],[184,68]];
const thumbB = [[1,12],[8,16],[22,23],[26,30],[35,29],[47,45],[54,39],[60,31],[69,42],[73,35],[78,41],[85,30],[91,41],[96,32],[109,45],[112,38],[116,43],[120,40],[130,43],[139,54],[148,46],[159,43],[169,60],[175,51],[180,63],[182,70],[184,70]];
let thumbGrid = '';
for (let y = 5; y < 122; y += 12) thumbGrid += `M0 ${y}H184`;
[30, 40, 50, 60, 70, 80, 90, 100, 200, 300, 400, 500, 600, 700, 800, 900, 1000, 2000, 3000, 4000, 5000, 6000, 7000, 8000, 9000, 10000, 15000].forEach(f => {
  thumbGrid += `M${Math.round(184 * Math.log10(f / 20) / 3)} 0V122`;
});

document.getElementById('cards').innerHTML = measurements.map(([time, color], i) => {
  const last = i === measurements.length - 1;
  const note = last ? 'Delay -0.0383 ms (-13 mm, -0.52 in)\nusing estimated IR delay relative to Acoustic\nreference on  R with no timing offset' : '';
  return `<div class="card-wrap"><article class="card">
    <div class="card-grid">
      <div class="thumb"><svg viewBox="0 0 184 122"><path d="${thumbGrid}" stroke="#e2e2e2" stroke-width="2"/><path d="${smooth(i ? thumbB : thumbA)}" fill="none" stroke="${color}" stroke-width="2"/></svg><b>${i + 1}</b><i>20</i><i>20.0k</i></div>
      <div><input type="text" value="Aug 30" aria-label="Measurement ${i + 1} name">
        <div class="info">Aug 30.mdat<br>30/08/2023 ${time} PM<br>Mic/Meter: 7001806.txt<br>${last ? 'Soundcard: 7001806.txt' : ''}</div></div>
      <div class="card-icons"><svg><use href="#close"/></svg><svg><use href="#disk"/></svg><svg style="color:${color}"><use href="#pen"/></svg>${last ? '<svg><use href="#doc"/></svg>' : ''}</div>
    </div>
    <textarea aria-label="Notes ${i + 1}">${note}</textarea>
    ${last ? '<button class="btn">Change Cal...</button>' : ''}
  </article></div>`;
}).join('');

document.getElementById('legend').innerHTML = measurements.map(([, color, level], i) =>
  `<div class="trace" style="color:${color}"><input type="checkbox" id="t${i}"${i === 7 ? ' checked' : ''}${i === 0 ? ' class="focus"' : ''}><label for="t${i}">${i + 1}: Aug 30</label>${i === 7 ? '<span class="psy"><b>Psy</b></span>' : ''}<output>${level} dB</output></div>`
).join('');
```
